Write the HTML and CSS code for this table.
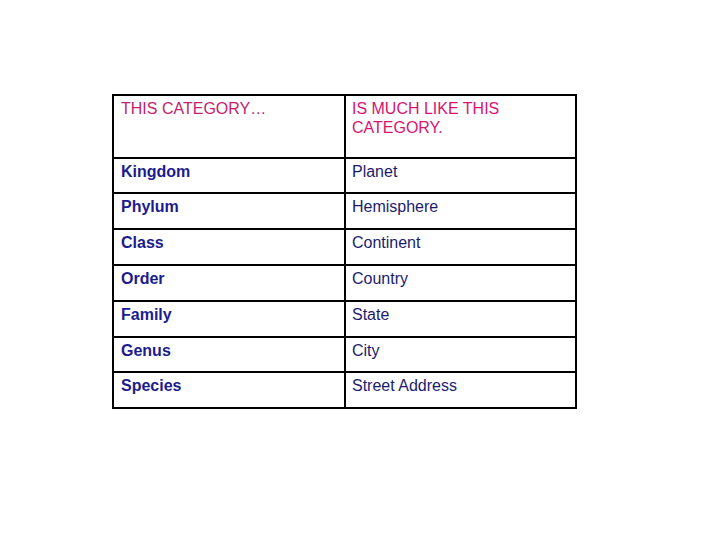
FILE: index.html
```html
<!DOCTYPE html>
<html>
<head>
<meta charset="utf-8">
<link rel="stylesheet" href="styles.css">
</head>
<body>
<table class="cmp">
  <tr class="head">
    <td class="h1">THIS CATEGORY…</td>
    <td class="h2">IS MUCH LIKE THIS CATEGORY.</td>
  </tr>
  <tr class="r35"><td class="k">Kingdom</td><td class="v">Planet</td></tr>
  <tr class="r36"><td class="k">Phylum</td><td class="v">Hemisphere</td></tr>
  <tr class="r36"><td class="k">Class</td><td class="v">Continent</td></tr>
  <tr class="r36"><td class="k">Order</td><td class="v">Country</td></tr>
  <tr class="r36"><td class="k">Family</td><td class="v">State</td></tr>
  <tr class="r35"><td class="k">Genus</td><td class="v">City</td></tr>
  <tr class="r36"><td class="k">Species</td><td class="v">Street Address</td></tr>
</table>
</body>
</html>
```
FILE: styles.css
```css
html, body {
  margin: 0;
  padding: 0;
  background: #ffffff;
}
body {
  padding: 94px 0 0 112px;
  font-family: "Liberation Sans", Arial, sans-serif;
  font-size: 16px;
}
.cmp {
  border-collapse: collapse;
  table-layout: fixed;
  width: 465px;
}
.cmp td {
  border: 2px solid #000;
  vertical-align: top;
  padding: 3px 6px 0 7px;
  line-height: 19px;
  width: 50%;
}
.head td { height: 58px; }
.r35 td { height: 30px; }
.r36 td { height: 31px; }
.h1 { color: #c2246c; }
.h2 { color: #d8146e; padding-right: 20px; }
.cmp td.h2, .cmp td.v { padding-left: 6px; }
.k { color: #1c1c8e; font-weight: bold; }
.v { color: #1c1c6e; }
```
